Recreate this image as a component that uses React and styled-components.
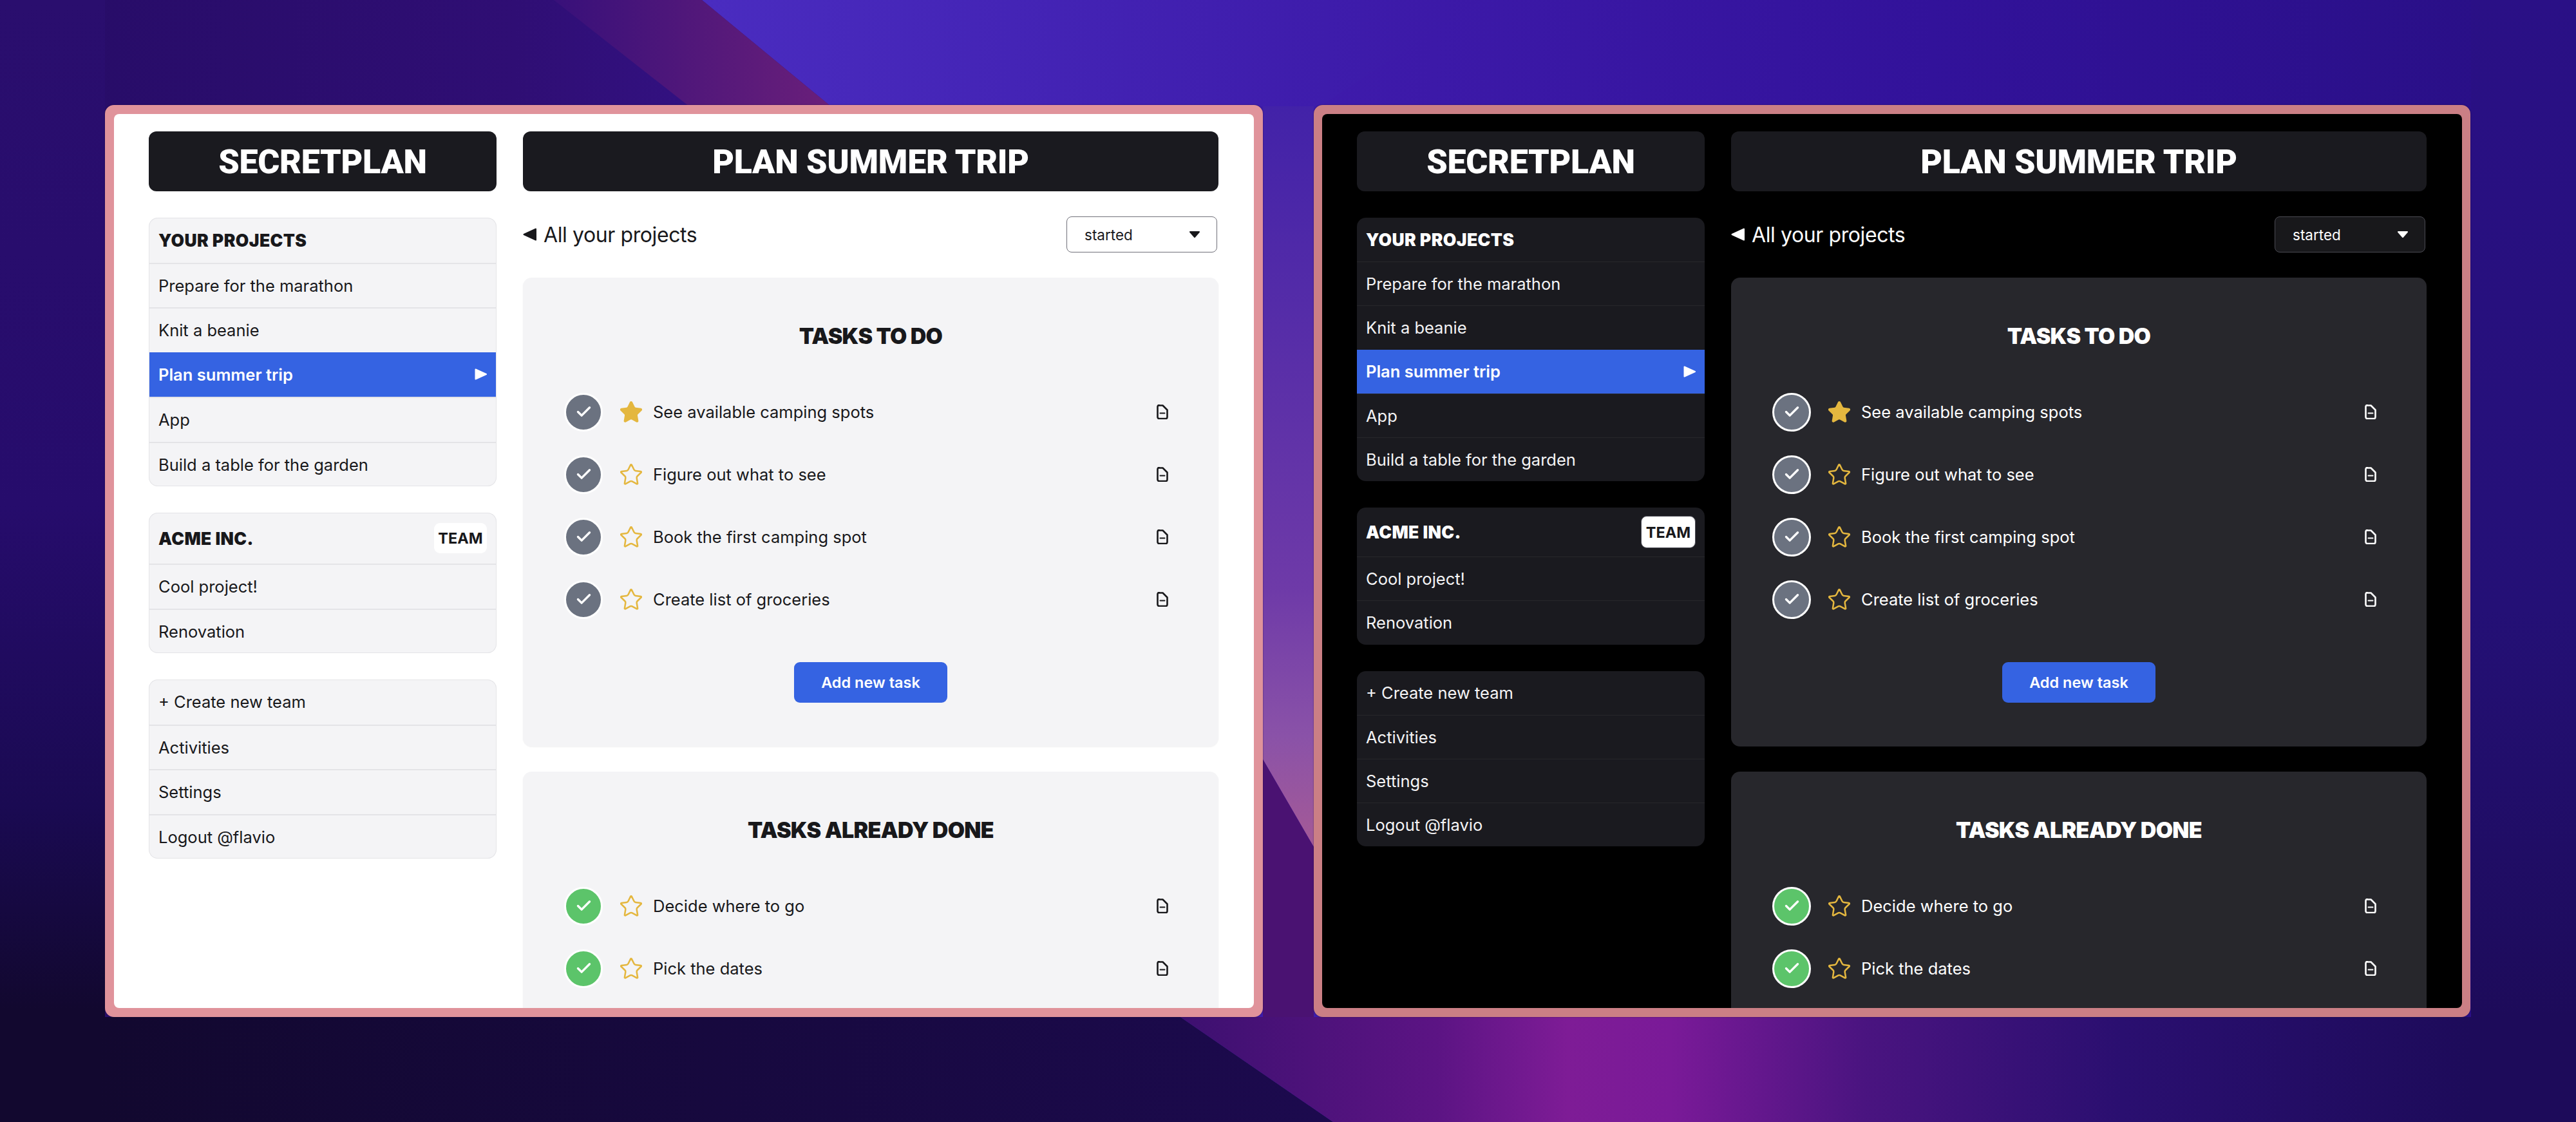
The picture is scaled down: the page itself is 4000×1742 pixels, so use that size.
import React from 'react'
import styled, { createGlobalStyle, ThemeProvider } from 'styled-components'
import { Check, Star } from 'lucide-react'

const light = {
  frame: '#e0939b',
  frameSide: 14,
  frameWidth: 1798,
  page: '#ffffff',
  titleBg: '#1a1a1f',
  listBg: '#f4f4f6',
  line: '#e4e4e7',
  lineWidth: 2,
  rowHeight: 69.5,
  rowPad: 15,
  teamHead: 79,
  text: '#18181b',
  rowText: '#18181b',
  cardBg: '#f4f4f6',
  selectBg: '#ffffff',
  selectBorder: '#71717a',
  badgeBorder: '#ffffff',
  badgeWidth: 82,
  badgeHeight: 47,
  cardShadow: '0 1px 2px rgba(0,0,0,0.06)',
}

const dark = {
  frame: '#cb7f85',
  frameSide: 13,
  frameWidth: 1796,
  page: '#000000',
  titleBg: '#1a1a1f',
  listBg: '#1a1a1f',
  line: '#27272a',
  lineWidth: 1,
  rowHeight: 68.2,
  rowPad: 14,
  teamHead: 76,
  text: '#ffffff',
  rowText: '#f4f4f5',
  cardBg: '#27272c',
  selectBg: '#18181b',
  selectBorder: '#4a4a52',
  badgeBorder: '#52525b',
  badgeWidth: 85,
  badgeHeight: 50,
  cardShadow: 'none',
}

const GlobalStyle = createGlobalStyle`
  html, body {
    margin: 0;
    padding: 0;
    background: #1d0b5c;
  }
  * {
    box-sizing: border-box;
  }
`

const Page = styled.div`
  position: relative;
  width: 4000px;
  height: 1742px;
  overflow: hidden;
  display: flex;
  align-items: flex-start;
  gap: 79px;
  padding: 163px 0 0 163px;
  font-family: Inter, 'Liberation Sans', sans-serif;
`

const Wallpaper = styled.svg`
  position: absolute;
  inset: 0;
  width: 100%;
  height: 100%;
`

const Frame = styled.div`
  position: relative;
  flex: none;
  width: ${(p) => p.theme.frameWidth}px;
  height: 1416px;
  border: solid ${(p) => p.theme.frame};
  border-width: 14px ${(p) => p.theme.frameSide}px;
  border-radius: 14px;
  background: ${(p) => p.theme.frame};
  box-shadow: 0 0 2px rgba(10, 0, 40, 0.6);
`

const Screen = styled.div`
  height: 100%;
  overflow: hidden;
  border-radius: 8px;
  background: ${(p) => p.theme.page};
  color: ${(p) => p.theme.text};
  display: grid;
  grid-template-columns: 540px 1080px;
  column-gap: 41px;
  padding: 27px 0 0 54px;
`

const Sidebar = styled.div`
  display: flex;
  flex-direction: column;
  gap: 41px;
`

const Main = styled.div`
  display: flex;
  flex-direction: column;
`

const TitleBar = styled.div`
  height: 93px;
  padding-top: 2px;
  border-radius: 12px;
  background: ${(p) => p.theme.titleBg};
  color: #ffffff;
  display: flex;
  align-items: center;
  justify-content: center;
  font-family: Roboto, sans-serif;
  font-weight: 900;
  font-size: 52px;
  letter-spacing: -0.3px;
`

const List = styled.div`
  border-radius: 14px;
  overflow: hidden;
  background: ${(p) => p.theme.listBg};
  box-shadow: inset 0 0 0 ${(p) => p.theme.lineWidth - 1}px ${(p) => p.theme.line};
`

const Row = styled.div`
  height: ${(p) => p.theme.rowHeight}px;
  padding: 0 ${(p) => p.theme.rowPad}px;
  display: flex;
  align-items: center;
  justify-content: space-between;
  font-size: 25.5px;
  color: ${(p) => p.theme.rowText};
  &:not(:first-child) {
    border-top: ${(p) => p.theme.lineWidth}px solid ${(p) => p.theme.line};
  }
`

const HeadRow = styled(Row)`
  font-size: 26.5px;
  font-weight: 900;
  letter-spacing: 0.4px;
  color: ${(p) => p.theme.text};
`

const TeamRow = styled(HeadRow)`
  height: ${(p) => p.theme.teamHead}px;
`

const ActiveRow = styled(Row)`
  margin: 0 ${(p) => p.theme.lineWidth - 1}px;
  padding: 0 ${(p) => p.theme.rowPad - p.theme.lineWidth + 1}px;
  background: #3563e2;
  color: #ffffff;
  font-weight: 600;
  &:not(:first-child) {
    border-top: none;
  }
`

const TeamBadge = styled.span`
  width: ${(p) => p.theme.badgeWidth}px;
  height: ${(p) => p.theme.badgeHeight}px;
  display: flex;
  align-items: center;
  justify-content: center;
  border-radius: 9px;
  background: #ffffff;
  border: 1px solid ${(p) => p.theme.badgeBorder};
  color: #18181b;
  font-size: 23.5px;
  font-weight: 700;
  letter-spacing: 0;
`

const Toolbar = styled.div`
  height: 134px;
  display: flex;
  align-items: center;
  justify-content: space-between;
`

const BackLink = styled.div`
  display: flex;
  align-items: center;
  gap: 11px;
  font-size: 32px;
  letter-spacing: -0.4px;
`

const Triangle = styled.svg`
  flex: none;
  fill: currentColor;
  stroke: currentColor;
  stroke-width: 2;
  stroke-linejoin: round;
`

const Select = styled.div`
  width: 234px;
  height: 56px;
  margin-right: 2px;
  padding: 0 26px 0 27px;
  display: flex;
  align-items: center;
  justify-content: space-between;
  border: 1px solid ${(p) => p.theme.selectBorder};
  border-radius: 8px;
  background: ${(p) => p.theme.selectBg};
  font-size: 22.5px;
`

const Card = styled.section`
  margin-bottom: 39px;
  padding: 71px 64px 68px;
  border-radius: 14px;
  background: ${(p) => p.theme.cardBg};
  box-shadow: ${(p) => p.theme.cardShadow};
`

const CardTitle = styled.h2`
  margin: 0 0 49px;
  text-align: center;
  font-size: 34px;
  line-height: 40px;
  font-weight: 900;
  letter-spacing: -0.7px;
`

const TaskRow = styled.div`
  height: 97px;
  display: flex;
  align-items: center;
  font-size: 25.5px;
`

const Tick = styled.span`
  flex: none;
  width: 60px;
  height: 60px;
  margin-right: 25px;
  display: flex;
  align-items: center;
  justify-content: center;
  border-radius: 50%;
  border: 3.5px solid #ffffff;
  background: ${(p) => (p.$done ? '#5cc46a' : '#6b7280')};
  color: #ffffff;
`

const StarIcon = styled(Star)`
  flex: none;
  margin-right: 15px;
  color: #e4b73f;
  fill: ${(p) => (p.$on ? '#e4b73f' : 'none')};
`

const TaskName = styled.span`
  flex: 1;
`

const NoteIcon = styled.svg`
  flex: none;
  margin-right: 14px;
  fill: none;
  stroke: currentColor;
  stroke-width: 2.6;
  stroke-linejoin: round;
  stroke-linecap: round;
`

const AddButton = styled.button`
  display: block;
  width: 238px;
  height: 63px;
  margin: 49px auto 0;
  border: none;
  border-radius: 9px;
  background: #3563e2;
  color: #ffffff;
  font-family: inherit;
  font-size: 23.5px;
  font-weight: 600;
`

const todo = [
  { name: 'See available camping spots', starred: true },
  { name: 'Figure out what to see' },
  { name: 'Book the first camping spot' },
  { name: 'Create list of groceries' },
]
const done = [
  { name: 'Decide where to go', done: true },
  { name: 'Pick the dates', done: true },
]

function Task({ task }) {
  return (
    <TaskRow>
      <Tick $done={task.done}>
        <Check size={27} strokeWidth={3} />
      </Tick>
      <StarIcon size={38} strokeWidth={1.6} $on={task.starred} />
      <TaskName>{task.name}</TaskName>
      <NoteIcon width="18" height="23" viewBox="0 0 18 23">
        <path d="M4 1.5h5.5l7 7v11a2.5 2.5 0 0 1-2.5 2.5H4a2.5 2.5 0 0 1-2.5-2.5v-16a2.5 2.5 0 0 1 2.5-2.5z" />
        <path d="M5.5 13.5h7" strokeWidth="2" />
      </NoteIcon>
    </TaskRow>
  )
}

function Board({ theme }) {
  return (
    <ThemeProvider theme={theme}>
      <Frame>
        <Screen>
          <Sidebar>
            <TitleBar>SECRETPLAN</TitleBar>
            <List>
              <HeadRow>YOUR PROJECTS</HeadRow>
              <Row>Prepare for the marathon</Row>
              <Row>Knit a beanie</Row>
              <ActiveRow>
                Plan summer trip
                <Triangle width="19" height="18" viewBox="0 0 19 18">
                  <path d="M1.5 1.5L18 9 1.5 16.5z" />
                </Triangle>
              </ActiveRow>
              <Row>App</Row>
              <Row>Build a table for the garden</Row>
            </List>
            <List>
              <TeamRow>
                ACME INC.
                <TeamBadge>TEAM</TeamBadge>
              </TeamRow>
              <Row>Cool project!</Row>
              <Row>Renovation</Row>
            </List>
            <List>
              <Row>+ Create new team</Row>
              <Row>Activities</Row>
              <Row>Settings</Row>
              <Row>Logout @flavio</Row>
            </List>
          </Sidebar>
          <Main>
            <TitleBar>PLAN SUMMER TRIP</TitleBar>
            <Toolbar>
              <BackLink>
                <Triangle width="21" height="20" viewBox="0 0 21 20">
                  <path d="M20 1.5L1.5 10 20 18.5z" />
                </Triangle>
                All your projects
              </BackLink>
              <Select>
                started
                <Triangle width="16" height="10" viewBox="0 0 16 10">
                  <path d="M1 1h14l-7 8z" />
                </Triangle>
              </Select>
            </Toolbar>
            <Card>
              <CardTitle>TASKS TO DO</CardTitle>
              {todo.map((task) => (
                <Task key={task.name} task={task} />
              ))}
              <AddButton>Add new task</AddButton>
            </Card>
            <Card>
              <CardTitle>TASKS ALREADY DONE</CardTitle>
              {done.map((task) => (
                <Task key={task.name} task={task} />
              ))}
            </Card>
          </Main>
        </Screen>
      </Frame>
    </ThemeProvider>
  )
}

export default function App() {
  return (
    <>
      <GlobalStyle />
      <Page>
        <Wallpaper viewBox="0 0 4000 1742" preserveAspectRatio="none">
          <defs>
            <linearGradient id="base" x1="0" y1="0" x2="1" y2="0">
              <stop offset="0" stopColor="#260c66" />
              <stop offset="0.2" stopColor="#2f0e74" />
              <stop offset="0.5" stopColor="#3f1bac" />
              <stop offset="0.75" stopColor="#32129a" />
              <stop offset="1" stopColor="#280f84" />
            </linearGradient>
            <linearGradient id="wedge" x1="0" y1="0" x2="1" y2="0">
              <stop offset="0" stopColor="#38107a" />
              <stop offset="1" stopColor="#6a1f7a" />
            </linearGradient>
            <linearGradient id="blue" x1="0" y1="0" x2="1" y2="0">
              <stop offset="0" stopColor="#4a2cc0" />
              <stop offset="1" stopColor="#3b18a6" />
            </linearGradient>
            <linearGradient id="leftSide" x1="0" y1="0" x2="0" y2="1">
              <stop offset="0" stopColor="#2a0e6e" />
              <stop offset="0.45" stopColor="#260c6c" />
              <stop offset="0.72" stopColor="#1a0a52" />
              <stop offset="0.9" stopColor="#12082f" />
            </linearGradient>
            <linearGradient id="rightSide" x1="0" y1="0" x2="0" y2="1">
              <stop offset="0" stopColor="#2a1086" />
              <stop offset="0.6" stopColor="#241076" />
              <stop offset="1" stopColor="#1d0b5a" />
            </linearGradient>
            <linearGradient id="glow" x1="0" y1="0" x2="0" y2="1">
              <stop offset="0" stopColor="#4222a8" />
              <stop offset="0.65" stopColor="#6e3aa8" />
              <stop offset="0.85" stopColor="#8a52a8" />
              <stop offset="1" stopColor="#a55a96" />
            </linearGradient>
            <linearGradient id="band" x1="0" y1="0" x2="1" y2="0">
              <stop offset="0" stopColor="#12082f" />
              <stop offset="1" stopColor="#1c0a4e" />
            </linearGradient>
            <linearGradient id="floor" x1="0" y1="0" x2="1" y2="0">
              <stop offset="0" stopColor="#3d1070" />
              <stop offset="0.2" stopColor="#5c1484" />
              <stop offset="0.3" stopColor="#7e1c96" />
              <stop offset="0.38" stopColor="#7a1a98" />
              <stop offset="0.53" stopColor="#4a1480" />
              <stop offset="0.73" stopColor="#2a0f70" />
              <stop offset="1" stopColor="#1d0b5a" />
            </linearGradient>
          </defs>
          <rect width="4000" height="1742" fill="url(#base)" />
          <path d="M1090 0L1290 165H2050L2300 0z" fill="url(#blue)" />
          <path d="M860 0L1070 165H1290L1090 0z" fill="url(#wedge)" />
          <rect width="163" height="1742" fill="url(#leftSide)" />
          <rect x="3837" width="163" height="1579" fill="url(#rightSide)" />
          <path d="M1961 165H2040V1315L1961 1179z" fill="url(#glow)" />
          <path d="M1961 1179L2040 1315V1580H1961z" fill="#4a1272" />
          <path d="M150 1579H1833L2070 1742H150z" fill="url(#band)" />
          <rect y="1579" x="0" width="150" height="163" fill="#12082f" />
          <path d="M1833 1579H3837V1742H2070z" fill="url(#floor)" />
          <path d="M3837 1579H4000V1742H3837z" fill="#1d0b5a" />
        </Wallpaper>
        <Board theme={light} />
        <Board theme={dark} />
      </Page>
    </>
  )
}
